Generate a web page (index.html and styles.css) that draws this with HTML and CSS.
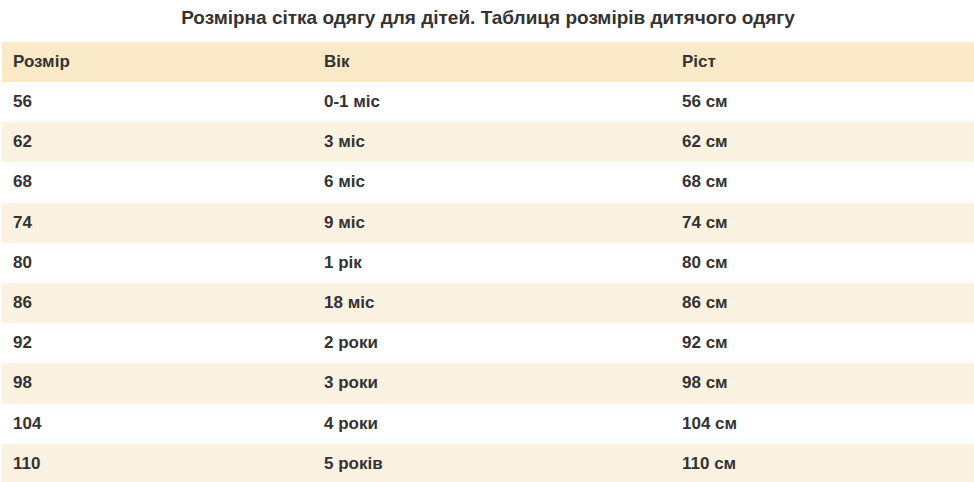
FILE: index.html
```html
<!DOCTYPE html>
<html lang="uk">
<head>
<meta charset="utf-8">
<link rel="stylesheet" href="styles.css">
</head>
<body>
<div class="wrap">
  <h2 class="title">Розмірна сітка одягу для дітей. Таблиця розмірів дитячого одягу</h2>
  <table class="sizes">
    <thead>
      <tr><th class="c1">Розмір</th><th class="c2">Вік</th><th class="c3">Ріст</th></tr>
    </thead>
    <tbody>
      <tr><td>56</td><td>0-1 міс</td><td>56 см</td></tr>
      <tr><td>62</td><td>3 міс</td><td>62 см</td></tr>
      <tr><td>68</td><td>6 міс</td><td>68 см</td></tr>
      <tr><td>74</td><td>9 міс</td><td>74 см</td></tr>
      <tr><td>80</td><td>1 рік</td><td>80 см</td></tr>
      <tr><td>86</td><td>18 міс</td><td>86 см</td></tr>
      <tr><td>92</td><td>2 роки</td><td>92 см</td></tr>
      <tr><td>98</td><td>3 роки</td><td>98 см</td></tr>
      <tr><td>104</td><td>4 роки</td><td>104 см</td></tr>
      <tr><td>110</td><td>5 років</td><td>110 см</td></tr>
    </tbody>
  </table>
</div>
</body>
</html>
```

FILE: styles.css
```css
html, body {
  margin: 0;
  padding: 0;
  background: #ffffff;
}
body {
  font-family: "Liberation Sans", Arial, sans-serif;
  color: #333333;
}
.wrap {
  padding: 0 0 0 2px;
}
.title {
  margin: 0;
  height: 42px;
  line-height: 36px;
  text-align: center;
  font-size: 19px;
  font-weight: bold;
  color: #333333;
}
.sizes {
  width: 972px;
  border-collapse: collapse;
  table-layout: fixed;
}
.sizes th, .sizes td {
  height: 40.2px;
  padding: 0 11px;
  text-align: left;
  font-size: 17px;
  font-weight: bold;
  box-sizing: border-box;
}
.sizes thead tr {
  background: #fbeac8;
}
.sizes thead th {
  height: 40px;
}
.sizes .c1 { width: 311px; }
.sizes .c2 { width: 358px; }
.sizes .c3 { width: 303px; }
.sizes tbody tr:nth-child(even) {
  background: #fcf2e2;
}
.sizes tbody tr:nth-child(odd) {
  background: #ffffff;
}
```
